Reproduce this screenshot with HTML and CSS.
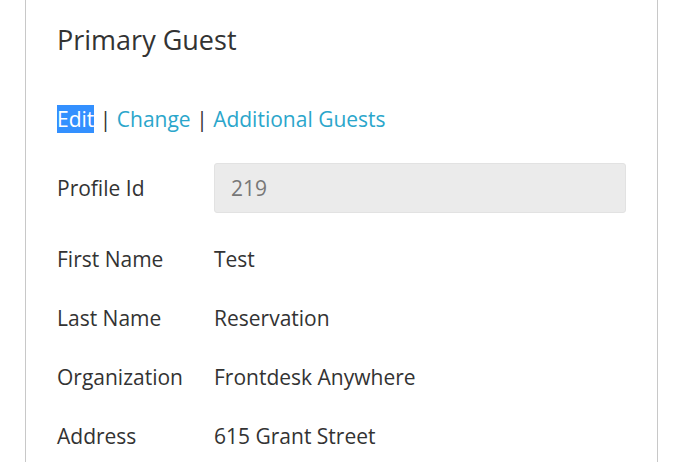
FILE: index.html
```html
<!DOCTYPE html>
<html>
<head>
<meta charset="utf-8">
<link rel="stylesheet" href="styles.css">
</head>
<body>
<div class="card">
  <h2 class="title">Primary Guest</h2>
  <div class="links">
    <a class="link selected" href="#">Edit</a> <span class="sep">|</span> <a class="link" href="#">Change</a> <span class="sep">|</span> <a class="link" href="#">Additional Guests</a>
  </div>
  <div class="row row-input">
    <div class="label">Profile Id</div>
    <div class="value"><div class="input">219</div></div>
  </div>
  <div class="row">
    <div class="label">First Name</div>
    <div class="value">Test</div>
  </div>
  <div class="row">
    <div class="label">Last Name</div>
    <div class="value">Reservation</div>
  </div>
  <div class="row">
    <div class="label">Organization</div>
    <div class="value">Frontdesk Anywhere</div>
  </div>
  <div class="row">
    <div class="label">Address</div>
    <div class="value">615 Grant Street</div>
  </div>
</div>
</body>
</html>
```
FILE: styles.css
```css
html, body {
  margin: 0;
  padding: 0;
  background: #fff;
  height: 100%;
  overflow: hidden;
}
body {
  font-family: "Open Sans", "Liberation Sans", sans-serif;
  color: #333;
  padding: 0 30px 0 25px;
}
.card {
  border-left: 1px solid #c8c8c8;
  border-right: 1px solid #c8c8c8;
  padding: 22px 31px 0 31px;
  height: 100vh;
  box-sizing: border-box;
  width: 633px;
}
.title {
  margin: 0;
  font-size: 27px;
  font-weight: 400;
  line-height: 36px;
  color: #333;
}
.links {
  margin-top: 49px;
  font-size: 21px;
  line-height: 24px;
  color: #333;
}
.link {
  color: #2ba6cb;
  text-decoration: none;
}
.selected {
  background: #3390ff;
  color: #fff;
}
.row {
  display: flex;
  align-items: center;
  font-size: 21px;
  line-height: 28px;
  height: 59px;
}
.row-input {
  margin-top: 27px;
  height: 60px;
  margin-bottom: 11px;
}
.label {
  width: 157px;
  flex: none;
}
.value {
  flex: 1;
}
.input {
  height: 50px;
  box-sizing: border-box;
  background: #ebebeb;
  border: 1px solid #e2e2e2;
  border-radius: 3px;
  padding: 0 16px;
  display: flex;
  align-items: center;
  color: #777;
  width: 412px;
}
```
